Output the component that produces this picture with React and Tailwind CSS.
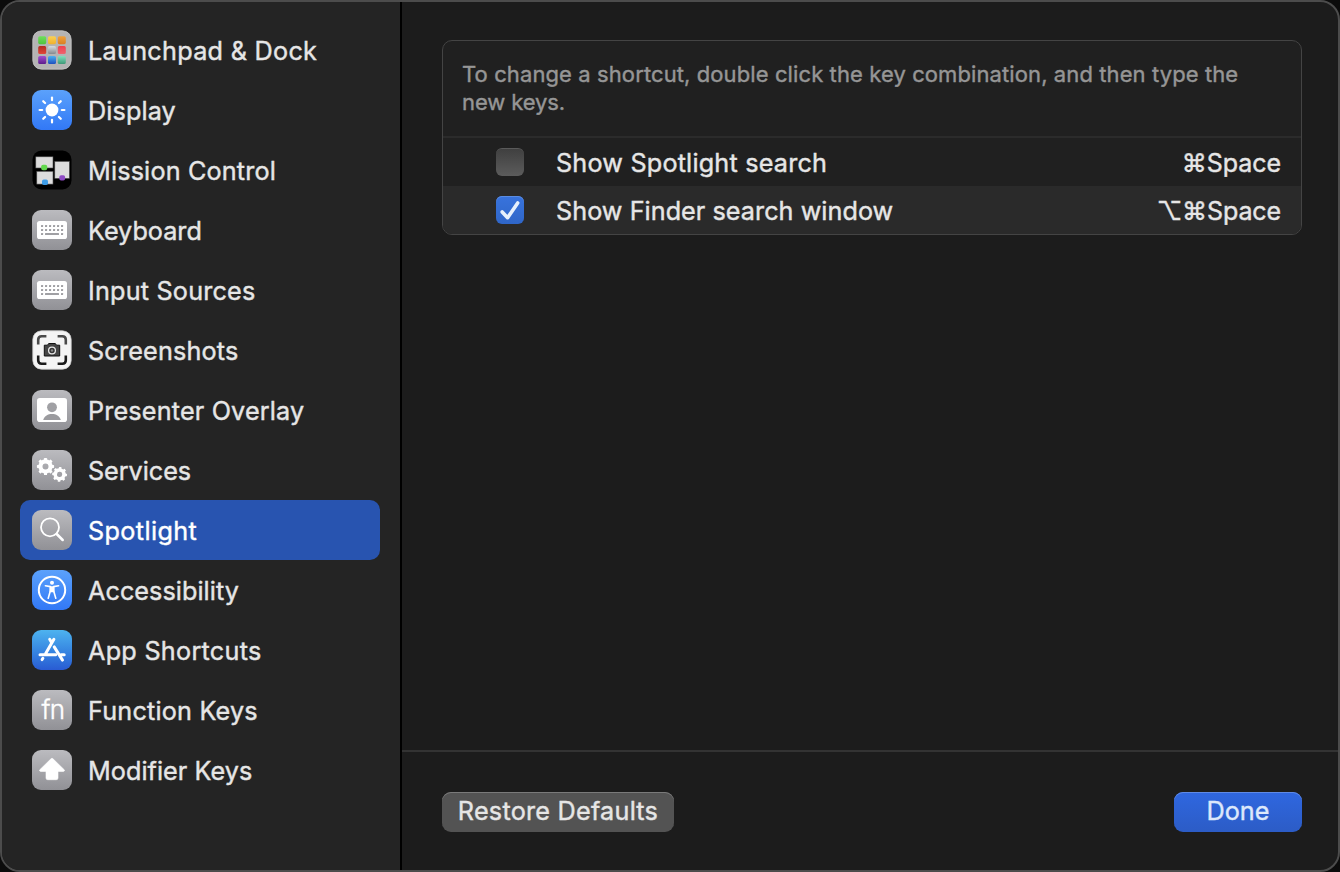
import React from "react";

const Gear = ({ cx, cy, r, rot = 0 }) => (
  <g transform={`translate(${cx} ${cy}) rotate(${rot})`}>
    <circle r={r * 0.59} fill="none" stroke="#fff" strokeWidth={r * 0.48} />
    {Array.from({ length: 8 }, (_, i) => (
      <rect key={i} x={-r * 0.18} y={-r} width={r * 0.36} height={r * 0.35} rx={r * 0.08} fill="#fff" transform={`rotate(${i * 45})`} />
    ))}
  </g>
);

const tones = {
  gray: "bg-linear-to-b from-[#bbbbbf] to-[#919196]",
  blue: "bg-linear-to-b from-[#5ba1fb] to-[#3278f6]",
  store: "bg-linear-to-b from-[#4eb3ef] to-[#2a5bd3]",
};

const Tile = ({ tone, children }) => (
  <span className={`flex size-10 shrink-0 overflow-hidden rounded-[9px] ${tones[tone] ?? ""}`}>
    <svg viewBox="0 0 40 40" className="size-10">{children}</svg>
  </span>
);

const tiles = [
  ["#6fe05a", "#4fc43f"], ["#fbd252", "#efb02e"], ["#f0a23c", "#d97f23"],
  ["#b52a20", "#e0483a"], ["#d5dade", "#85898e"], ["#f0404f", "#ee6470"],
  ["#a44fd0", "#5c1c8c"], ["#4db0ef", "#1d50c0"], ["#7fe0bd", "#3f9a78"],
];

const Launchpad = () => (
  <Tile>
    <defs>
      {tiles.map(([a, b], i) => (
        <linearGradient key={i} id={`lp${i}`} x2="0" y2="1">
          <stop stopColor={a} />
          <stop offset="1" stopColor={b} />
        </linearGradient>
      ))}
    </defs>
    <rect x="0.8" y="0.8" width="38.4" height="38.4" rx="8.6" fill="#b4b4b4" stroke="#cbcbcb" strokeWidth="0.8" />
    {tiles.map((_, i) => (
      <rect key={i} x={6.2 + (i % 3) * 9.8} y={6.2 + Math.floor(i / 3) * 9.9} width="8" height="8" rx="1.6" fill={`url(#lp${i})`} />
    ))}
  </Tile>
);

const Display = () => (
  <Tile tone="blue">
    <circle cx="20" cy="20" r="6.4" fill="#fff" />
    {Array.from({ length: 8 }, (_, i) => (
      <path key={i} d="M20 7.6v2.6" stroke="#fff" strokeWidth="2.2" strokeLinecap="round" transform={`rotate(${i * 45} 20 20)`} />
    ))}
  </Tile>
);

const Mission = () => (
  <Tile>
    <rect x="0.5" y="0.5" width="39" height="39" rx="9" fill="#000" />
    <g fill="#dcdcdc" stroke="#4a4a4a" strokeWidth="0.6">
      <rect x="3.8" y="6.8" width="17.2" height="11.2" />
      <rect x="4.8" y="21.3" width="16.2" height="12.8" />
      <rect x="22.8" y="11.4" width="14.6" height="17" />
    </g>
    <rect x="9.2" y="14.8" width="6" height="5.4" rx="1.8" fill="#62d84e" />
    <rect x="10" y="29.6" width="6" height="5.4" rx="1.8" fill="#3f9de8" />
    <rect x="27.3" y="25.2" width="5.8" height="5.4" rx="1.8" fill="#8e4bc4" />
  </Tile>
);

const Keyboard = () => (
  <Tile tone="gray">
    <rect x="5" y="11" width="30" height="18" rx="2.6" fill="#fff" />
    <g fill="#a0a0a4">
      {[15, 19].map((y) => [9, 13, 17, 21, 25, 29].map((x) => (
        <rect key={`${x}-${y}`} x={x} y={y} width="2.1" height="2.1" rx="0.5" />
      )))}
      <rect x="9" y="23" width="2.1" height="2" rx="0.5" />
      <rect x="13" y="23" width="14" height="2" rx="0.6" />
      <rect x="29" y="23" width="2.1" height="2" rx="0.5" />
    </g>
  </Tile>
);

const Screens = () => (
  <Tile>
    <rect x="0.8" y="0.8" width="38.4" height="38.4" rx="8.6" fill="#f4f4f4" stroke="#cfcfcf" strokeWidth="0.8" />
    <g fill="none" strokeWidth="2.6">
      <path d="M6.2 14.4V9.700q0-3.500 3.500-3.500h4.700M25.600 6.200h4.700q3.500 0 3.500 3.500v4.700" stroke="#4a4a4a" />
      <path d="M33.800 25.600v4.700q0 3.500-3.500 3.500h-4.700M14.400 33.800H9.700q-3.500 0-3.500-3.500v-4.700" stroke="#1a1a1a" />
    </g>
    <path d="M12.300 15.200h3.200l1.200-1.700h6.600l1.200 1.700h3.200V26H12.300z" fill="#454545" stroke="#111" strokeWidth="1" strokeLinejoin="round" />
    <circle cx="20" cy="20.500" r="3.400" fill="#333" stroke="#e8e8e8" strokeWidth="1.300" />
    <circle cx="20" cy="20.500" r="1.200" fill="#888" />
  </Tile>
);

const Presenter = () => (
  <Tile tone="gray">
    <rect x="5" y="8" width="30" height="24" rx="2.800" fill="#fff" />
    <circle cx="20" cy="17.300" r="4.900" fill="#a0a0a4" />
    <path d="M11.200 30c1.300-4.200 4.700-6 8.800-6s7.500 1.800 8.800 6z" fill="#9b9b9f" />
  </Tile>
);

const Services = () => (
  <Tile tone="gray">
    <Gear cx={13.5} cy={16.5} r={8.6} />
    <Gear cx={27.6} cy={24.4} r={7.4} rot={5} />
  </Tile>
);

const Search = () => (
  <Tile tone="gray">
    <circle cx="18" cy="17.300" r="9" fill="none" stroke="#fff" strokeWidth="1.800" />
    <path d="M24.700 24l6 6" stroke="#fff" strokeWidth="2.500" strokeLinecap="round" />
  </Tile>
);

const Access = () => (
  <Tile tone="blue">
    <circle cx="20" cy="20" r="13.200" fill="none" stroke="#fff" strokeWidth="2" />
    <circle cx="20" cy="12.700" r="2" fill="#fff" />
    <path d="M13.400 15.700l5 .9v4.200l-2.200 7.500M26.600 15.700l-5 .9v4.200l2.200 7.500" fill="none" stroke="#fff" strokeWidth="1.600" strokeLinecap="round" strokeLinejoin="round" />
    <path d="M17.700 16.200h4.600l.2 6h-5z" fill="#fff" />
  </Tile>
);

const Store = () => (
  <Tile tone="store">
    <g stroke="#fff" strokeWidth="3" strokeLinecap="round" fill="none">
      <path d="M21.900 9.300L13.700 23.500M10.900 28.200l-.8 1.400M17.700 9.300l2 3.400M22.200 16.900l8.300 13.200M8 24.700h15.600M29 24.700h3.200" />
    </g>
  </Tile>
);

const Fn = () => (
  <span className="flex size-10 shrink-0 items-center justify-center rounded-[9px] bg-linear-to-b from-[#bbbbbf] to-[#919196] pb-px pl-0.5 text-[26px] leading-none font-light tracking-[-0.6px] text-white">
    fn
  </span>
);

const Modifier = () => (
  <Tile tone="gray">
    <path d="M19.200 8.600Q20 7.900 20.800 8.600L32.200 19.700q1 1.300-.8 1.700H26V28q0 1.700-1.700 1.700h-8.600Q14 29.700 14 28v-6.600H8.600Q6.800 21 7.800 19.700z" fill="#fff" stroke="#fff" strokeWidth="0.600" strokeLinejoin="round" />
  </Tile>
);

const items = [
  ["Launchpad & Dock", Launchpad, "tracking-[0.29px]"],
  ["Display", Display, "tracking-[0.12px]"],
  ["Mission Control", Mission, "tracking-[0.17px]"],
  ["Keyboard", Keyboard, "tracking-normal"],
  ["Input Sources", Keyboard, "tracking-[0.2px]"],
  ["Screenshots", Screens, "tracking-[0.18px]"],
  ["Presenter Overlay", Presenter, "tracking-[0.17px]"],
  ["Services", Services, "tracking-[-0.04px]"],
  ["Spotlight", Search, "tracking-[0.38px]"],
  ["Accessibility", Access, "tracking-[0.06px]"],
  ["App Shortcuts", Store, "tracking-[0.28px]"],
  ["Function Keys", Fn, "tracking-[0.2px]"],
  ["Modifier Keys", Modifier, "tracking-[0.05px]"],
];

export default function App() {
  return (
    <div className="h-[872px] w-[1340px] overflow-hidden bg-[#0c0c0c] font-['Inter',sans-serif] text-[25.2px] text-[#e6e6e6] [-webkit-text-stroke:0.4px_currentColor]">
      <div className="flex h-full overflow-hidden rounded-[20px] border-2 border-[#4c4c4c] bg-[#1c1c1c]">
        <nav className="w-[400px] shrink-0 border-r-2 border-black bg-[#242424] pt-[18px] pr-5 pl-[18px]">
          {items.map(([label, Icon, tracking]) => (
            <div key={label} className={`flex h-[60px] items-center gap-4 rounded-[10px] px-3 ${label === "Spotlight" ? "bg-[#2854b0] text-white" : ""}`}>
              <Icon />
              <span className={`pt-[3px] whitespace-nowrap ${tracking}`}>{label}</span>
            </div>
          ))}
        </nav>
        <main className="flex min-w-0 flex-1 flex-col">
          <section className="flex-1 pt-[38px] pr-9 pl-10">
            <div className="overflow-hidden rounded-[10px] border border-[#444] bg-[#202020]">
              <p className="h-[97px] border-b-2 border-[#2b2b2b] px-[19px] pt-[19px] text-[22px] leading-7 text-[#969696]">
                <span className="tracking-[0.1px] whitespace-nowrap">To change a shortcut, double click the key combination, and then type the</span>{" "}
                <span className="tracking-[-0.1px]">new keys.</span>
              </p>
              <div className="flex h-12 items-center pr-5 pl-[53px]">
                <span className="size-7 rounded-md border-t border-[#5a5a5a] bg-linear-to-b from-[#404040] to-[#5c5c5c]" />
                <span className="ml-8 pt-1 tracking-[0.2px]">Show Spotlight search</span>
                <span className="ml-auto pt-1 text-[25px] tracking-[-0.05px]">⌘Space</span>
              </div>
              <div className="flex h-12 items-center bg-[#2a2a2a] pr-5 pl-[53px]">
                <span className="size-7 rounded-md bg-linear-to-b from-[#3873dd] to-[#2f66c8] shadow-[inset_0_1px_0_#5a8ce2]">
                  <svg viewBox="0 0 28 28" className="size-7">
                    <path d="M6.200 15.900l5.400 5.800L21.700 6.900" fill="none" stroke="#e6f0fc" strokeWidth="3.600" strokeLinecap="round" strokeLinejoin="round" />
                  </svg>
                </span>
                <span className="ml-8 pt-1 tracking-[0.05px]">Show Finder search window</span>
                <span className="ml-auto pt-1 text-[25px] tracking-[-0.1px]">⌥⌘Space</span>
              </div>
            </div>
          </section>
          <footer className="flex h-[120px] items-start justify-between border-t-2 border-[#333] pt-10 pr-9 pl-10">
            <button className="h-10 w-[232px] rounded-[9px] bg-[#535353] tracking-[0.25px] whitespace-nowrap shadow-[inset_0_1px_0_#7a7a7a]">Restore Defaults</button>
            <button className="h-10 w-32 rounded-[9px] bg-linear-to-b from-[#2f67e0] to-[#2c5cc6] text-[#dde8fb] shadow-[inset_0_1px_0_#5f8ae6]">Done</button>
          </footer>
        </main>
      </div>
    </div>
  );
}
